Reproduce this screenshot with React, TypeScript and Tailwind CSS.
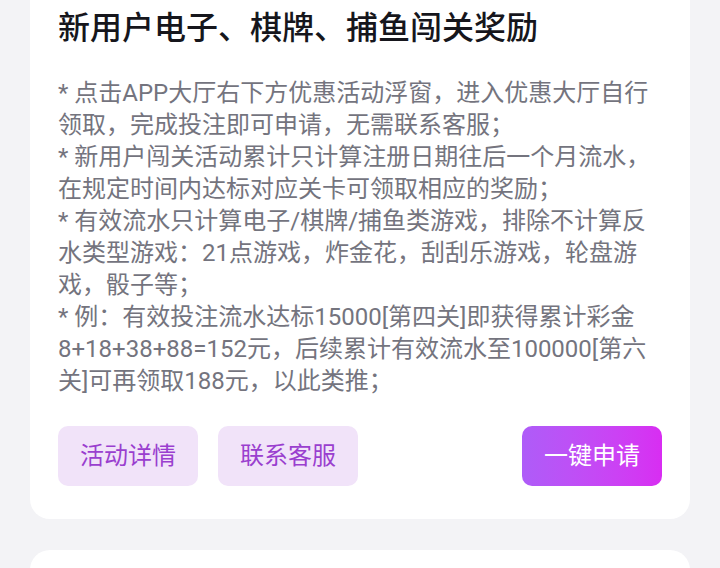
const rules = [
  "* 点击APP大厅右下方优惠活动浮窗，进入优惠大厅自行领取，完成投注即可申请，无需联系客服；",
  "* 新用户闯关活动累计只计算注册日期往后一个月流水，在规定时间内达标对应关卡可领取相应的奖励；",
  "* 有效流水只计算电子/棋牌/捕鱼类游戏，排除不计算反水类型游戏：21点游戏，炸金花，刮刮乐游戏，轮盘游戏，骰子等；",
  "* 例：有效投注流水达标15000[第四关]即获得累计彩金8+18+38+88=152元，后续累计有效流水至100000[第六关]可再领取188元，以此类推；",
]

const App = () => {
  return (
    <div
      className="h-[568px] bg-[#f3f3f6] px-[30px] overflow-hidden"
      style={{ fontFamily: 'Roboto, "Noto Sans CJK SC", sans-serif' }}
    >
      <div className="bg-white rounded-b-[20px] px-[28px] pt-[6px] pb-[33px]">
        <h1 className="text-[32px] leading-[44px] font-medium text-[#16161c]">
          新用户电子、棋牌、捕鱼闯关奖励
        </h1>
        <div className="mt-[27px] text-[24px] leading-[32px] text-[#74747e]">
          {rules.map((r) => (
            <p key={r}>{r}</p>
          ))}
        </div>
        <div className="mt-[29px] flex items-center gap-5">
          <button className="w-[140px] h-[60px] rounded-[10px] bg-[#f1e3f9] text-[24px] text-[#9a3fcf]">
            活动详情
          </button>
          <button className="w-[140px] h-[60px] rounded-[10px] bg-[#f1e3f9] text-[24px] text-[#9a3fcf]">
            联系客服
          </button>
          <button className="ml-auto w-[140px] h-[60px] rounded-[10px] bg-gradient-to-r from-[#ae5cf8] to-[#d82df2] text-[24px] text-white">
            一键申请
          </button>
        </div>
      </div>
      <div className="mt-[31px] h-[40px] bg-white rounded-t-[20px]" />
    </div>
  )
}

export default App
